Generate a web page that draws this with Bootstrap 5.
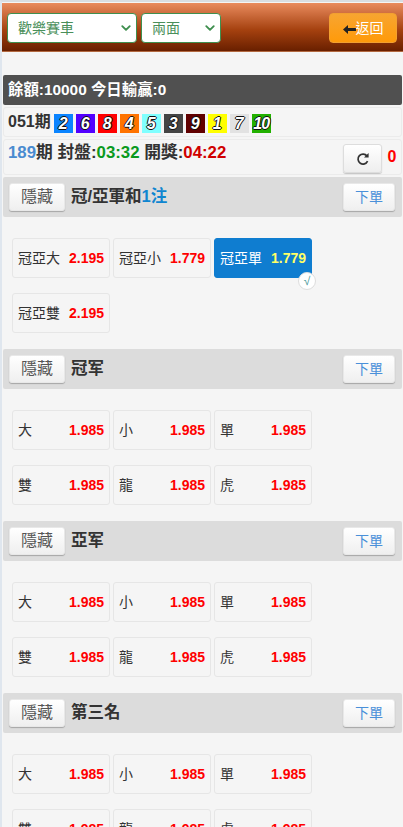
<!DOCTYPE html>
<html lang="zh-Hant">
  <head>
    <meta charset="UTF-8" />
    <meta name="viewport" content="width=device-width, initial-scale=1.0" />
    <link
      rel="stylesheet"
      href="https://cdn.jsdelivr.net/npm/bootstrap@5.3.0/dist/css/bootstrap.min.css"
    />
    <title>兩面</title>
    <style>
      html {
        scrollbar-width: none;
      }
      body {
        background: #f5f5f5;
        color: #333;
        font-family: "Liberation Sans", "Noto Sans CJK TC", sans-serif;
        font-size: 14px;
        padding: 1px 1px 0 0;
        border-top: 2px solid #d9dde2;
        border-left: 2px solid #dfe6ee;
      }
      .top-bar {
        height: 49px;
        margin-right: -1px;
        padding: 10px 6px 0 5px;
        background: linear-gradient(#e98b5e, #a5410f 55%, #6a2000 97%, #d88f62);
      }
      .top-bar .form-select {
        height: 30px;
        padding: 0 0 0 10px;
        border: 1px solid #3f8f4f;
        border-radius: 4px;
        color: #4a8f5a;
        font-size: 14px;
        background-position: right 4px center;
        background-size: 12px 10px;
        background-image: url("data:image/svg+xml,%3csvg xmlns='http://www.w3.org/2000/svg' viewBox='0 0 16 16'%3e%3cpath fill='none' stroke='%233f8f4f' stroke-linecap='round' stroke-linejoin='round' stroke-width='3' d='m2 5 6 6 6-6'/%3e%3c/svg%3e");
      }
      .game-select {
        width: 130px;
      }
      .mode-select {
        width: 80px;
      }
      .back-btn {
        width: 68px;
        height: 30px;
        padding: 0;
        border: 1px solid #f2a030;
        border-radius: 4px;
        background: linear-gradient(#f7a531, #ff9a0a);
        color: #fff;
        font-size: 14px;
      }
      .back-btn svg {
        vertical-align: -1px;
      }
      .balance-bar {
        margin: 23px 0 0 1px;
        height: 30px;
        padding: 0 5px;
        background: #505050;
        color: #fff;
        font-size: 15.4px;
        font-weight: 700;
        line-height: 30px;
        border-radius: 2px;
      }
      .info-row {
        margin: 2px 0 0 1px;
        background: #f5f5f5;
        border: 1px solid #ebebeb;
        border-radius: 3px;
        font-weight: 700;
      }
      .draw-row {
        height: 30px;
        padding: 0 4px;
        font-size: 16px;
        gap: 3px;
      }
      .ball {
        width: 19px;
        height: 19px;
        margin-top: 2px;
        font: italic 700 16px/19px "Liberation Sans", sans-serif;
        text-align: center;
        color: #fff;
        text-shadow: -1px 0 #111, 1px 0 #111, 0 -1px #111, 0 1px #111;
      }
      .draw-row .ball:first-of-type {
        margin-left: 1px;
      }
      .ball-10 {
        letter-spacing: -1px;
      }
      .timer-row {
        height: 36px;
        margin-bottom: 2px;
        padding: 0 4px;
        font-size: 16.8px;
      }
      .timer-text {
        line-height: 26px;
        align-self: flex-start;
      }
      .period-no {
        color: #4a8bd0;
      }
      .close-time {
        color: #0a9a1e;
      }
      .open-time {
        color: #d00000;
      }
      .refresh-btn {
        width: 39px;
        height: 29px;
        padding: 0;
        margin-top: 4px;
        border: 1px solid #ddd;
        background: linear-gradient(#fff, #eee);
        box-shadow: 0 1px 1px rgba(0, 0, 0, 0.2);
        border-radius: 3px;
      }
      .refresh-count {
        width: 10px;
        color: #f00;
        font-size: 16px;
        margin-left: 5px;
      }
      .group-head {
        margin: 1px 0 0 1px;
        height: 40px;
        padding: 0 7px 0 6px;
        background: #dcdcdc;
        border-radius: 2px;
      }
      .group-name {
        margin: 0 0 0 6px;
        align-self: flex-start;
        font-size: 16.5px;
        font-weight: 700;
        line-height: 38px;
      }
      .picked-count {
        color: #0f86d0;
      }
      .hide-btn,
      .submit-btn {
        height: 28px;
        padding: 0;
        border: 1px solid #e8e8e8;
        border-radius: 3px;
        background: linear-gradient(#fff, #efefef);
        box-shadow: 0 1px 1px rgba(0, 0, 0, 0.25);
        font-size: 14px;
      }
      .hide-btn {
        width: 56px;
        color: #555;
        font-size: 16px;
      }
      .submit-btn {
        width: 52px;
        color: #4a90d9;
      }
      .group-body {
        display: grid;
        grid-template-columns: repeat(3, 98px);
        grid-auto-rows: 40px;
        column-gap: 3px;
        row-gap: 15px;
        padding: 21px 0 15px 10px;
      }
      .odd-cell {
        position: relative;
        padding: 0 5px;
        border: 1px solid #e6e6e6;
        border-radius: 3px;
        font-size: 14px;
        line-height: 38px;
      }
      .odd-value {
        color: #f00;
        font-size: 14px;
        font-weight: 700;
      }
      .odd-cell.picked {
        background: #0f7dd0;
        border-color: #0f7dd0;
        color: #fff;
      }
      .picked .odd-value {
        color: #ffff66;
      }
      .tick {
        position: absolute;
        right: -5px;
        bottom: -13px;
        width: 18px;
        height: 18px;
        border: 1px solid #ddd;
        border-radius: 50%;
        background: #fff;
        color: #4a9a9a;
        font-size: 12px;
        line-height: 16px;
        text-align: center;
      }
    </style>
  </head>
  <body>
    <div class="top-bar d-flex">
      <select class="form-select game-select"><option>歡樂賽車</option></select>
      <select class="form-select mode-select ms-1"><option>兩面</option></select>
      <button class="btn back-btn ms-auto">
        <svg width="13" height="9" viewBox="0 0 13 9"><path d="M0 4.5 5 0v3h8v3H5v3z" fill="#222" /></svg>返回
      </button>
    </div>

    <div class="balance-bar">餘額:10000 今日輸贏:0</div>

    <div class="info-row draw-row d-flex align-items-center">
      <span>051期</span>
      <span class="ball" style="background: #0a84ff">2</span>
      <span class="ball" style="background: #5200ff">6</span>
      <span class="ball" style="background: #ff0000">8</span>
      <span class="ball" style="background: #ff7300">4</span>
      <span class="ball" style="background: #80ffff">5</span>
      <span class="ball" style="background: #444444">3</span>
      <span class="ball" style="background: #600000">9</span>
      <span class="ball" style="background: #ffff00">1</span>
      <span class="ball" style="background: #e2e2e2">7</span>
      <span class="ball ball-10" style="background: #22b000">10</span>
    </div>

    <div class="info-row timer-row d-flex">
      <span class="timer-text">
        <span class="period-no">189</span>期 封盤:<span class="close-time">03:32</span>
        開獎:<span class="open-time">04:22</span>
      </span>
      <button class="btn refresh-btn ms-auto">
        <svg width="14" height="14" viewBox="0 0 14 14">
          <path d="M11.6 9.2A5 5 0 1 1 11 4" fill="none" stroke="#333" stroke-width="1.7" />
          <path d="M12.6 1v4.6H8z" fill="#333" />
        </svg>
      </button>
      <span class="refresh-count align-self-center text-center">0</span>
    </div>

    <div class="group-head d-flex align-items-center">
      <button class="btn hide-btn">隱藏</button>
      <h2 class="group-name">冠/亞軍和<span class="picked-count">1注</span></h2>
      <button class="btn submit-btn ms-auto">下單</button>
    </div>
    <div class="group-body">
      <div class="odd-cell d-flex justify-content-between"><span>冠亞大</span><span class="odd-value">2.195</span></div>
      <div class="odd-cell d-flex justify-content-between"><span>冠亞小</span><span class="odd-value">1.779</span></div>
      <div class="odd-cell picked d-flex justify-content-between">
        <span>冠亞單</span><span class="odd-value">1.779</span><span class="tick">√</span>
      </div>
      <div class="odd-cell d-flex justify-content-between"><span>冠亞雙</span><span class="odd-value">2.195</span></div>
    </div>

    <div class="group-head d-flex align-items-center">
      <button class="btn hide-btn">隱藏</button>
      <h2 class="group-name">冠军</h2>
      <button class="btn submit-btn ms-auto">下單</button>
    </div>
    <div class="group-body">
      <div class="odd-cell d-flex justify-content-between"><span>大</span><span class="odd-value">1.985</span></div>
      <div class="odd-cell d-flex justify-content-between"><span>小</span><span class="odd-value">1.985</span></div>
      <div class="odd-cell d-flex justify-content-between"><span>單</span><span class="odd-value">1.985</span></div>
      <div class="odd-cell d-flex justify-content-between"><span>雙</span><span class="odd-value">1.985</span></div>
      <div class="odd-cell d-flex justify-content-between"><span>龍</span><span class="odd-value">1.985</span></div>
      <div class="odd-cell d-flex justify-content-between"><span>虎</span><span class="odd-value">1.985</span></div>
    </div>

    <div class="group-head d-flex align-items-center">
      <button class="btn hide-btn">隱藏</button>
      <h2 class="group-name">亞军</h2>
      <button class="btn submit-btn ms-auto">下單</button>
    </div>
    <div class="group-body">
      <div class="odd-cell d-flex justify-content-between"><span>大</span><span class="odd-value">1.985</span></div>
      <div class="odd-cell d-flex justify-content-between"><span>小</span><span class="odd-value">1.985</span></div>
      <div class="odd-cell d-flex justify-content-between"><span>單</span><span class="odd-value">1.985</span></div>
      <div class="odd-cell d-flex justify-content-between"><span>雙</span><span class="odd-value">1.985</span></div>
      <div class="odd-cell d-flex justify-content-between"><span>龍</span><span class="odd-value">1.985</span></div>
      <div class="odd-cell d-flex justify-content-between"><span>虎</span><span class="odd-value">1.985</span></div>
    </div>

    <div class="group-head d-flex align-items-center">
      <button class="btn hide-btn">隱藏</button>
      <h2 class="group-name">第三名</h2>
      <button class="btn submit-btn ms-auto">下單</button>
    </div>
    <div class="group-body">
      <div class="odd-cell d-flex justify-content-between"><span>大</span><span class="odd-value">1.985</span></div>
      <div class="odd-cell d-flex justify-content-between"><span>小</span><span class="odd-value">1.985</span></div>
      <div class="odd-cell d-flex justify-content-between"><span>單</span><span class="odd-value">1.985</span></div>
      <div class="odd-cell d-flex justify-content-between"><span>雙</span><span class="odd-value">1.985</span></div>
      <div class="odd-cell d-flex justify-content-between"><span>龍</span><span class="odd-value">1.985</span></div>
      <div class="odd-cell d-flex justify-content-between"><span>虎</span><span class="odd-value">1.985</span></div>
    </div>

    <script src="https://cdn.jsdelivr.net/npm/bootstrap@5.3.0/dist/js/bootstrap.bundle.min.js"></script>
  </body>
</html>
